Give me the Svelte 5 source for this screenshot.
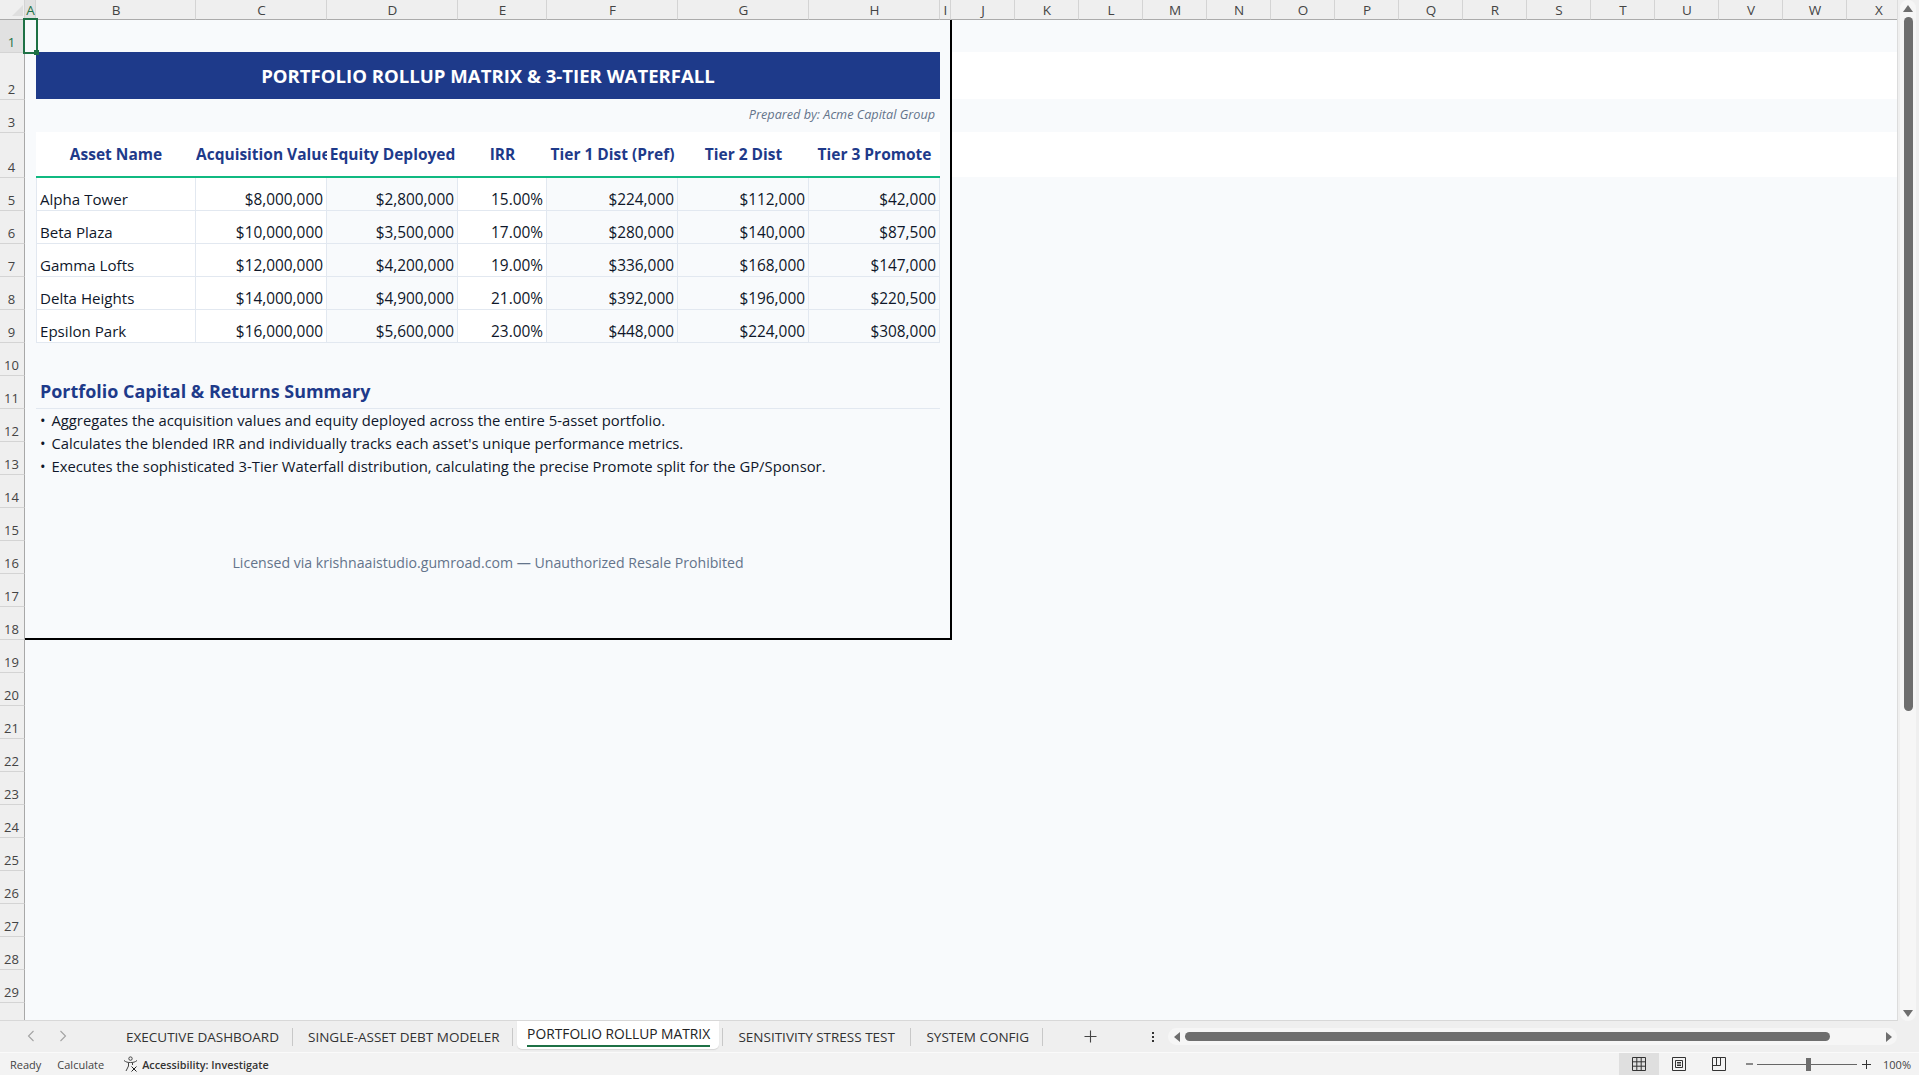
<script>
	const columns = [
		'A', 'B', 'C', 'D', 'E', 'F', 'G', 'H', 'I', 'J', 'K', 'L',
		'M', 'N', 'O', 'P', 'Q', 'R', 'S', 'T', 'U', 'V', 'W', 'X'
	]
	const rowNumbers = Array.from({ length: 29 }, (_, i) => i + 1)

	const headers = [
		'Asset Name',
		'Acquisition Value',
		'Equity Deployed',
		'IRR',
		'Tier 1 Dist (Pref)',
		'Tier 2 Dist',
		'Tier 3 Promote'
	]

	const assets = [
		['Alpha Tower', '$8,000,000', '$2,800,000', '15.00%', '$224,000', '$112,000', '$42,000'],
		['Beta Plaza', '$10,000,000', '$3,500,000', '17.00%', '$280,000', '$140,000', '$87,500'],
		['Gamma Lofts', '$12,000,000', '$4,200,000', '19.00%', '$336,000', '$168,000', '$147,000'],
		['Delta Heights', '$14,000,000', '$4,900,000', '21.00%', '$392,000', '$196,000', '$220,500'],
		['Epsilon Park', '$16,000,000', '$5,600,000', '23.00%', '$448,000', '$224,000', '$308,000']
	]

	const notes = [
		'Aggregates the acquisition values and equity deployed across the entire 5-asset portfolio.',
		"Calculates the blended IRR and individually tracks each asset's unique performance metrics.",
		'Executes the sophisticated 3-Tier Waterfall distribution, calculating the precise Promote split for the GP/Sponsor.'
	]

	const tabs = [
		'EXECUTIVE DASHBOARD',
		'SINGLE-ASSET DEBT MODELER',
		'PORTFOLIO ROLLUP MATRIX',
		'SENSITIVITY STRESS TEST',
		'SYSTEM CONFIG'
	]
	const activeTab = 2
</script>

<div class="app">
	<div class="workspace">
		<div class="sheet">
			<div class="corner"><span class="corner-mark"></span></div>
			{#each columns as col}
				<div class="col-head" class:current={col === 'A'}>{col}</div>
			{/each}

			{#each rowNumbers as n}
				<div class="row-head" class:current={n === 1} style="grid-row: {n + 1}">{n}</div>
			{/each}
			<div class="row-head tail"></div>

			<div class="band band-title"></div>
			<div class="band band-header"></div>

			<div class="title">PORTFOLIO ROLLUP MATRIX &amp; 3-TIER WATERFALL</div>
			<div class="prepared">Prepared by: Acme Capital Group</div>

			{#each assets as asset, r}
				<div class="tr" class:last={r === assets.length - 1} style="grid-row: {r + 6}">
					{#each asset as value, c}
						<div class="td" class:name={c === 0} class:shaded={c === 2 || c > 3}>{value}</div>
					{/each}
				</div>
			{/each}

			<div class="thead">
				{#each headers as label}
					<div class="th"><span>{label}</span></div>
				{/each}
			</div>

			<div class="summary">Portfolio Capital &amp; Returns Summary</div>
			<div class="notes">
				{#each notes as note}
					<div><span class="bullet">•</span> {note}</div>
				{/each}
			</div>
			<div class="license">Licensed via krishnaaistudio.gumroad.com — Unauthorized Resale Prohibited</div>

			<div class="frame"></div>
			<div class="selection"></div>
		</div>

		<div class="vscroll">
			<div class="vtrack">
				<div class="arrow-box"><span class="tri up"></span></div>
				<div class="vthumb"></div>
				<div class="vspace"></div>
				<div class="arrow-box low"><span class="tri down"></span></div>
			</div>
		</div>
	</div>

	<div class="tabbar">
		<div class="tab-nav">
			<svg width="8" height="12" viewBox="0 0 8 12"><path d="M6.500 1 1.500 6l5 5" fill="none" stroke="#a3a3a3" stroke-width="1.1" /></svg>
			<svg width="8" height="12" viewBox="0 0 8 12"><path d="M1.500 1l5 5-5 5" fill="none" stroke="#a3a3a3" stroke-width="1.1" /></svg>
		</div>
		{#each tabs as tab, i}
			<div class="tab" class:active={i === activeTab} class:before-active={i === activeTab - 1}>
				<span class="tab-label">{tab}</span>
			</div>
		{/each}
		<div class="tab-add">
			<svg width="13" height="13" viewBox="0 0 13 13"><path d="M6.500 0.500v12M0.500 6.500h12" stroke="#444" stroke-width="1.1" fill="none" /></svg>
		</div>
		<div class="tab-more">
			<i></i><i></i><i></i>
		</div>
		<div class="htrack">
			<span class="tri left"></span>
			<div class="hthumb"></div>
			<span class="tri right"></span>
		</div>
	</div>

	<div class="statusbar">
		<span class="st ready">Ready</span>
		<span class="st calc">Calculate</span>
		<svg class="a11y" width="16" height="16" viewBox="0 0 16 16" fill="none" stroke="#444" stroke-width="1">
			<circle cx="7.500" cy="2.600" r="1.700" />
			<path d="M1 4.500c2 1.600 3.500 2 6.500 2s4.500-.4 6.500-2" />
			<path d="M5.500 6.500v3.500L3 15" />
			<path d="M9.500 6.500V9" />
			<path d="M8.500 10.500l5 5M13.500 10.500l-5 5" stroke="#222" />
		</svg>
		<span class="st a11y-text">Accessibility: Investigate</span>

		<div class="view-group">
			<div class="view on">
				<svg width="14" height="14" viewBox="0 0 14 14" fill="none" stroke="#333" stroke-width="1">
					<path d="M.5.500h13v13H.5zM.5 4.800h13M.5 9.200h13M4.800.5v13M9.200.5v13" />
				</svg>
			</div>
			<div class="view">
				<svg width="14" height="14" viewBox="0 0 14 14" fill="none" stroke="#333" stroke-width="1">
					<path d="M.5.500h13v13H.5z" />
					<path d="M3.500 3.500h7v7h-7zM5 5.500h4M5 7h4M5 8.500h4" />
				</svg>
			</div>
			<div class="view">
				<svg width="14" height="14" viewBox="0 0 14 14" fill="none" stroke="#333" stroke-width="1">
					<path d="M.5 13.500V.5h13v13zM.5 8.500h8V.5M4.500.5v8" />
				</svg>
			</div>
		</div>

		<div class="zoom-ctl">
			<svg class="minus" width="8" height="8" viewBox="0 0 8 8"><path d="M0 4h7" stroke="#333" stroke-width="1.1" /></svg>
			<div class="slider"><span class="knob"></span></div>
			<svg width="9" height="9" viewBox="0 0 9 9"><path d="M4.500 0v9M0 4.500h9" stroke="#333" stroke-width="1" /></svg>
		</div>
		<span class="st zoom-pct">100%</span>
	</div>
</div>

<style>
	:global(body) {
		margin: 0;
		background: #f3f3f3;
	}

	.app {
		width: 1919px;
		height: 1075px;
		display: grid;
		grid-template-rows: 1021px 32px 22px;
		overflow: hidden;
		font-family: 'Open Sans', 'Noto Sans', sans-serif;
		color: #0f172a;
	}

	.workspace {
		display: flex;
		min-height: 0;
	}

	.sheet {
		position: relative;
		width: 1897px;
		height: 1020px;
		flex: none;
		display: grid;
		grid-template-columns: 25px 11px 160px 131px 131px 89px 131px 131px 131px 11px repeat(14, 64px) 64px;
		grid-template-rows: 20px 32px 47px 33px 45px repeat(25, 33px) 19px;
		background: #f8fafc;
		border-right: 1px solid #dcdcdc;
		border-bottom: 1px solid #d8d8d8;
		overflow: hidden;
	}

	.corner {
		grid-row: 1;
		grid-column: 1;
		background: #efefef;
		border-bottom: 1px solid #ababab;
		border-right: 1px solid #d4d4d4;
		box-sizing: border-box;
		display: flex;
		align-items: flex-end;
		justify-content: flex-end;
		padding: 0 1px 3px 0;
	}

	.corner-mark {
		width: 0;
		height: 0;
		border-left: 11px solid transparent;
		border-bottom: 11px solid #dfdfdf;
	}

	.col-head {
		grid-row: 1;
		background: #efefef;
		border-right: 1px solid #d4d4d4;
		border-bottom: 1px solid #ababab;
		box-sizing: border-box;
		font-size: 13.5px;
		line-height: 20px;
		text-align: center;
		padding-left: 1px;
		color: #444;
		overflow: hidden;
	}

	.col-head.current {
		background: #e1e1e1;
		color: #1e7145;
	}

	.row-head {
		grid-column: 1;
		background: #efefef;
		border-right: 1px solid #a8a8a8;
		border-top: 1px solid #d4d4d4;
		box-sizing: border-box;
		font-size: 13px;
		line-height: 18px;
		padding: 0 1px 1px 0;
		color: #444;
		display: flex;
		align-items: flex-end;
		justify-content: center;
	}

	.row-head.current {
		background: #e1e1e1;
		border-top-color: #e1e1e1;
		color: #1e7145;
	}

	.row-head.tail {
		grid-row: 31;
	}

	.band {
		grid-column: 11 / -1;
		background: #fff;
	}

	.band-title {
		grid-row: 3;
	}

	.band-header {
		grid-row: 5;
	}

	.title {
		grid-row: 3;
		grid-column: 3 / 10;
		background: #1e3a8a;
		color: #fff;
		font-size: 18.57px;
		font-weight: 700;
		padding-bottom: 1px;
		box-sizing: border-box;
		display: flex;
		align-items: center;
		justify-content: center;
		white-space: nowrap;
	}

	.prepared {
		grid-row: 4;
		grid-column: 3 / 10;
		color: #64748b;
		font-size: 12.67px;
		font-style: italic;
		text-align: right;
		padding-right: 5px;
		line-height: 30px;
	}

	.thead,
	.tr {
		grid-column: 3 / 10;
		display: grid;
		grid-template-columns: subgrid;
	}

	.thead {
		grid-row: 5;
		background: #fff;
		border-bottom: 2px solid #10b981;
		margin-bottom: -1px;
	}

	.th {
		overflow: hidden;
		display: flex;
		align-items: center;
		justify-content: center;
		font-size: 15.5px;
		font-weight: 700;
		color: #1e3a8a;
		white-space: nowrap;
		height: 44px;
	}

	.th span {
		flex: none;
	}

	.th:nth-child(2) {
		justify-content: flex-start;
	}

	.tr + .tr .td {
		border-top: 1px solid #e2e8f0;
	}

	.tr.last {
		margin-bottom: -1px;
	}

	.tr.last .td {
		border-bottom: 1px solid #e2e8f0;
	}

	.td {
		background: #fff;
		border-right: 1px solid #e2e8f0;
		box-sizing: border-box;
		font-size: 15.4px;
		line-height: 20px;
		padding: 0 3px 0 0;
		display: flex;
		align-items: flex-end;
		justify-content: flex-end;
		white-space: nowrap;
	}

	.td.name {
		font-size: 15.1px;
		justify-content: flex-start;
		padding: 0 3px 1px 3px;
		border-left: 1px solid #e2e8f0;
	}

	.td.shaded {
		background: #f8fafc;
	}

	.summary {
		grid-row: 12;
		grid-column: 3 / 10;
		color: #1e3a8a;
		font-size: 17.93px;
		font-weight: 700;
		padding: 0 0 2px 4px;
		margin-bottom: -1px;
		border-bottom: 1px solid #e2e8f0;
		display: flex;
		align-items: flex-end;
		line-height: 30px;
		white-space: nowrap;
	}

	.notes {
		grid-row: 13 / 16;
		grid-column: 3 / 10;
		font-size: 14.8px;
		line-height: 23px;
		padding: 1px 0 0 4px;
		white-space: nowrap;
	}

	.bullet {
		margin-right: 2px;
	}

	.license {
		grid-row: 17;
		grid-column: 3 / 10;
		color: #64748b;
		font-size: 14.13px;
		text-align: center;
		line-height: 20px;
		align-self: end;
	}

	.frame {
		grid-row: 2 / 20;
		grid-column: 2 / 11;
		border-right: 2px solid #000;
		border-bottom: 2px solid #000;
		margin: 0 -1px -1px 0;
		box-sizing: border-box;
		pointer-events: none;
	}

	.selection {
		grid-row: 2;
		grid-column: 2;
		position: relative;
		border: 2px solid #1e7145;
		margin: -2px;
	}

	.selection::after {
		content: '';
		position: absolute;
		right: -3px;
		bottom: -3px;
		width: 5px;
		height: 5px;
		background: #1e7145;
	}

	.vscroll {
		flex: 1;
		background: #efefef;
		padding: 0 3px 0 2px;
	}

	.vtrack {
		height: 100%;
		background: #f6f6f6;
		border-radius: 8px;
		display: flex;
		flex-direction: column;
		align-items: center;
	}

	.arrow-box {
		height: 17px;
		width: 100%;
		display: flex;
		align-items: center;
		justify-content: center;
		flex: none;
	}

	.arrow-box.low {
		height: 14px;
		padding-bottom: 1px;
	}

	.vthumb {
		width: 9px;
		height: 694px;
		background: #6e6e6e;
		border-radius: 5px;
		flex: none;
	}

	.vspace {
		flex: 1;
	}

	.tri {
		display: block;
		width: 0;
		height: 0;
		flex: none;
	}

	.tri.up {
		border-left: 5px solid transparent;
		border-right: 5px solid transparent;
		border-bottom: 7px solid #6e6e6e;
	}

	.tri.down {
		border-left: 5px solid transparent;
		border-right: 5px solid transparent;
		border-top: 7px solid #6e6e6e;
	}

	.tri.left {
		border-top: 5px solid transparent;
		border-bottom: 5px solid transparent;
		border-right: 6px solid #6e6e6e;
	}

	.tri.right {
		border-top: 5px solid transparent;
		border-bottom: 5px solid transparent;
		border-left: 6px solid #6e6e6e;
	}

	.tabbar {
		background: #efefef;
		display: flex;
		align-items: flex-start;
		border-bottom: 1px solid #fafafa;
		box-sizing: border-box;
	}

	.tab-nav {
		width: 111px;
		flex: none;
		display: flex;
		gap: 24px;
		padding: 9px 0 0 27px;
		box-sizing: border-box;
	}

	.tab {
		flex: none;
		height: 18px;
		margin-top: 7px;
		padding: 0 13px 0 15px;
		border-right: 1px solid #c8c8c8;
		font-size: 13.5px;
		line-height: 18px;
		color: #333;
		white-space: nowrap;
	}

	.tab.before-active {
		margin-right: 4.5px;
		padding-right: 12px;
	}

	.tab.active {
		height: 28px;
		margin-top: 0;
		margin-right: 3.3px;
		padding: 3px 9px 0 10px;
		box-sizing: border-box;
		background: #fff;
		border: 0;
		border-radius: 0 0 5px 5px;
		box-shadow: 0 1px 1px #d6d6d6;
		color: #222;
		font-size: 13.8px;
		font-weight: 500;
	}

	.tab.active .tab-label {
		display: block;
		border-bottom: 2px solid #1e7145;
		height: 21px;
		line-height: 20px;
	}

	.tab.active + .tab {
		border-left: 1px solid #c8c8c8;
		padding-right: 15.5px;
	}

	.tab-add {
		width: 94px;
		flex: none;
		padding-top: 9px;
		display: flex;
		justify-content: center;
	}

	.tab-more {
		width: 31px;
		flex: none;
		display: flex;
		flex-direction: column;
		align-items: center;
		gap: 2px;
		padding-top: 11px;
	}

	.tab-more i {
		width: 2px;
		height: 2px;
		background: #333;
		display: block;
	}

	.htrack {
		margin: 7px 0 0 0;
		width: 729px;
		height: 17px;
		flex: none;
		background: #f6f6f6;
		border-radius: 9px;
		display: flex;
		align-items: center;
		padding: 0 5px 0 6px;
		box-sizing: border-box;
	}

	.hthumb {
		margin-left: 5px;
		width: 645px;
		height: 9px;
		border-radius: 5px;
		background: #6e6e6e;
		margin-right: auto;
	}

	.statusbar {
		background: #f3f3f3;
		display: flex;
		align-items: center;
		font-size: 11px;
		color: #444;
		height: 22px;
	}

	.st {
		white-space: nowrap;
		flex: none;
	}

	.ready {
		margin-left: 10px;
	}

	.calc {
		margin-left: 16px;
	}

	.a11y {
		margin-left: 19px;
		flex: none;
	}

	.a11y-text {
		margin-left: 3px;
		font-size: 10.8px;
		font-weight: 600;
		color: #333;
	}

	.view-group {
		margin-left: auto;
		display: flex;
		height: 100%;
	}

	.view {
		width: 40px;
		height: 100%;
		display: flex;
		align-items: center;
		justify-content: center;
	}

	.view.on {
		background: #dfdfdf;
	}

	.zoom-ctl {
		display: flex;
		align-items: center;
		margin-left: 6.5px;
		gap: 5px;
	}

	.minus {
		margin-right: -1.5px;
	}

	.slider {
		position: relative;
		width: 100px;
		height: 1px;
		background: #666;
	}

	.knob {
		position: absolute;
		left: 49px;
		top: -6px;
		width: 5px;
		height: 13px;
		background: #6e6e6e;
	}

	.zoom-pct {
		margin: 0 8px 0 12px;
		font-size: 11px;
	}
</style>
